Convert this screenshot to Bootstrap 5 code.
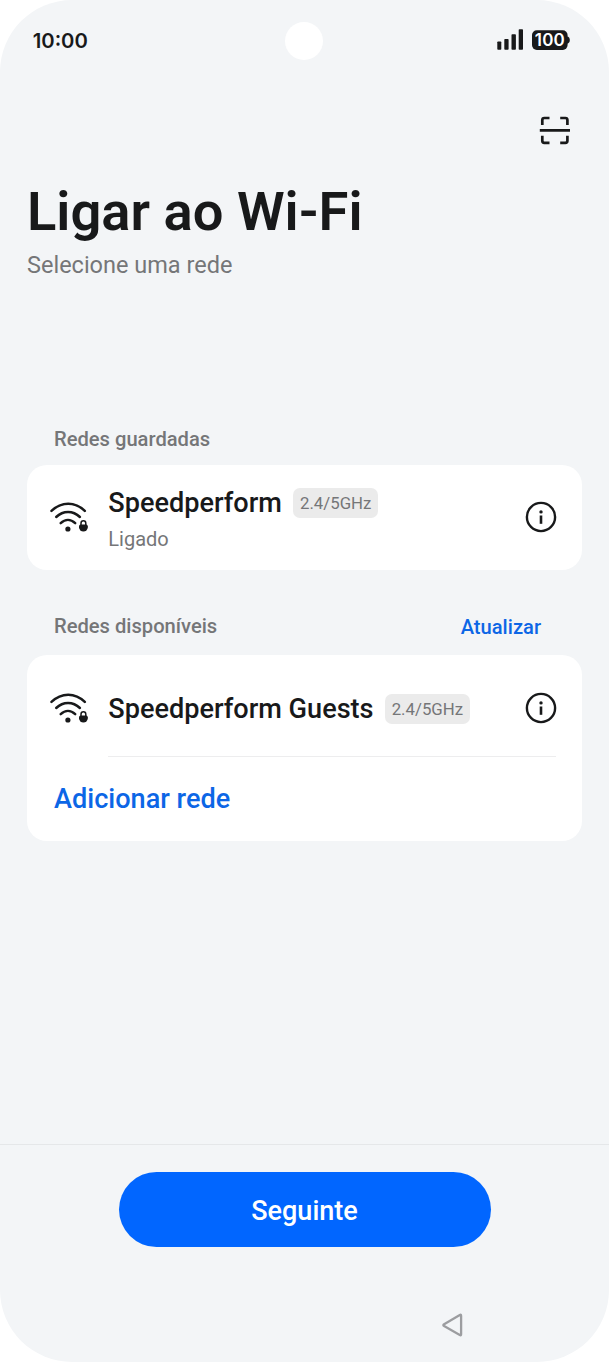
<!DOCTYPE html>
<html lang="pt">
<head>
<meta charset="utf-8">
<meta name="viewport" content="width=device-width, initial-scale=1">
<title>Ligar ao Wi-Fi</title>
<link href="https://cdn.jsdelivr.net/npm/bootstrap@5.3.0/dist/css/bootstrap.min.css" rel="stylesheet">
<style>
  body { font-family: Roboto, "Liberation Sans", sans-serif; background: #fff; color: #18191a; }
  .phone { height: 1362px; background: #f3f5f7; border-radius: 72px; overflow: hidden; }
  .status { height: 82px; padding: 0 39px 0 32.700px; font-family: Inter, Roboto, sans-serif; }
  .clock { font-size: 20.300px; font-weight: 600; line-height: 24px; }
  .camera { width: 38px; height: 38px; left: 285.400px; top: 21.700px; background: #fff; }
  .scan-row { height: 100px; padding: 33px 38px 0 0; }
  .headline { font-size: 54.300px; font-weight: 580; line-height: 60px; padding-left: 27px; }
  .muted { color: #757678; }
  .subtitle { font-size: 23.500px; line-height: 28px; margin-top: 9px; padding-left: 27px; }
  .section-label { font-size: 20.150px; font-weight: 500; line-height: 26px; }
  .label-saved { margin: 147px 0 0 54px; }
  .label-available { margin: 43px 68px 15px 54px; }
  .refresh { padding-top: 1px; }
  .panel { margin: 0 27px; background: #fff; border-radius: 20px; }
  .panel-saved { height: 105px; margin-top: 12.500px; }
  .net-row { padding: 0 25px 0 23px; }
  .row-guest { height: 101px; padding-top: 5px; }
  .row-guest .guest-name { padding-top: 2px; }
  .net-icon { width: 58.300px; }
  .ssid { font-size: 27.100px; font-weight: 500; line-height: 32px; }
  .band { width: 85px; height: 30px; border-radius: 7px; background: #ebebeb; color: #757678; font-size: 16.800px; font-weight: 450; margin-left: 11.300px; padding-top: 2px; }
  .state { font-size: 20px; line-height: 24px; margin-top: 8px; margin-bottom: -4px; }
  .blue { color: #0c66e6; }
  .divider { height: 1px; background: #ededee; margin: 0 26px 0 81px; }
  .add-row { height: 84px; padding: 0 0 0 27px; }
  .footer-bar { border-top: 1px solid #e5e7e9; padding-top: 27px; }
  .btn-next { width: 372px; height: 75px; background: #0166ff; color: #fff; font-size: 27px; font-weight: 500; }
  .btn-next:hover { background: #0059e0; color: #fff; }
  .btn-next span { display: block; padding-top: 3px; }
  .nav-keys { height: 115px; padding: 65px 0 0 441px; }
</style>
</head>
<body>
<svg class="d-none" xmlns="http://www.w3.org/2000/svg">
  <symbol id="wifi" viewBox="0 0 38 30">
    <g fill="none" stroke="#18191a" stroke-width="2.5" stroke-linecap="round">
      <path d="M1.500 8.900C11.500-.7 25-.7 34.800 8.900"/>
      <path d="M6.200 15C13.200 8.200 22.900 8.200 29.900 15"/>
      <path d="M10.700 21.200C15.200 16.900 20.700 16.900 25.200 21.200"/>
    </g>
    <circle cx="17.900" cy="27" r="2.600" fill="#18191a"/>
    <path d="M31 23.500v-2.300a2.400 2.400 0 0 1 4.800 0v2.300" fill="none" stroke="#18191a" stroke-width="1.500"/>
    <path d="M30.500 22.600h5.800q1.300 0 1.500 1.700v1a4.400 4.200 0 0 1-8.800 0v-1q.2-1.700 1.500-1.700z" fill="#18191a"/>
  </symbol>
  <symbol id="info" viewBox="0 0 32 32">
    <circle cx="16" cy="16" r="14.100" fill="none" stroke="#18191a" stroke-width="2.400"/>
    <circle cx="16" cy="10.900" r="1.700" fill="#18191a"/>
    <path d="M16 14.500v8.300" stroke="#18191a" stroke-width="2.600"/>
  </symbol>
</svg>

<div class="phone d-flex flex-column position-relative">
  <header class="status d-flex align-items-center justify-content-between">
    <span class="clock">10:00</span>
    <svg width="74" height="24" viewBox="0 0 74 24" role="img" aria-label="Rede e bateria">
      <g fill="#18191a">
        <rect x="1.300" y="12.500" width="4" height="8.300" rx=".8"/>
        <rect x="8.300" y="10" width="4.300" height="10.800" rx=".8"/>
        <rect x="15.500" y="5.200" width="4.400" height="15.600" rx=".8"/>
        <rect x="22.700" y=".2" width="4.300" height="20.600" rx=".8"/>
        <rect x="36" y="1.300" width="35.600" height="19.600" rx="4.800"/>
        <path d="M71 7.500q2.800.4 2.800 3.600t-2.800 3.600z"/>
      </g>
      <text x="53.800" y="17.300" text-anchor="middle" fill="#fff" font-family="Inter, Roboto, sans-serif" font-weight="600" font-size="17" textLength="30">100</text>
    </svg>
  </header>
  <span class="camera rounded-circle position-absolute"></span>

  <div class="scan-row d-flex justify-content-end align-items-start">
    <svg width="32" height="30" viewBox="0 0 32 30" fill="none" stroke="#18191a" stroke-width="2.700">
      <path d="M3.300 10V5q0-2 2-2H10.500M21.200 3h5.200q2 0 2 2V10M3.300 20.800v5q0 2 2 2H10.500M21.200 27.800h5.200q2 0 2-2v-5"/>
      <path d="M.8 15.400H31"/>
    </svg>
  </div>

  <h1 class="headline mb-0">Ligar ao Wi-Fi</h1>
  <p class="subtitle muted mb-0">Selecione uma rede</p>

  <h2 class="section-label muted label-saved mb-0">Redes guardadas</h2>
  <section class="panel panel-saved">
    <div class="net-row d-flex align-items-center h-100">
      <div class="net-icon"><svg width="38" height="30"><use href="#wifi"/></svg></div>
      <div class="flex-grow-1">
        <div class="d-flex align-items-center">
          <span class="ssid">Speedperform</span>
          <span class="band d-flex align-items-center justify-content-center">2.4/5GHz</span>
        </div>
        <div class="state muted">Ligado</div>
      </div>
      <svg width="32" height="32"><use href="#info"/></svg>
    </div>
  </section>

  <div class="label-available d-flex justify-content-between">
    <h2 class="section-label muted mb-0">Redes disponíveis</h2>
    <a class="section-label blue text-decoration-none refresh" href="#">Atualizar</a>
  </div>
  <section class="panel">
    <div class="net-row row-guest d-flex align-items-center">
      <div class="net-icon"><svg width="38" height="30"><use href="#wifi"/></svg></div>
      <div class="flex-grow-1 d-flex align-items-center guest-name">
        <span class="ssid">Speedperform Guests</span>
        <span class="band d-flex align-items-center justify-content-center">2.4/5GHz</span>
      </div>
      <svg width="32" height="32"><use href="#info"/></svg>
    </div>
    <div class="divider"></div>
    <a class="ssid blue d-flex align-items-center text-decoration-none add-row" href="#">Adicionar rede</a>
  </section>

  <footer class="mt-auto">
    <div class="footer-bar d-flex justify-content-center">
      <button class="btn btn-next rounded-pill border-0 p-0" type="button"><span>Seguinte</span></button>
    </div>
    <nav class="nav-keys d-flex">
      <svg width="24" height="26" viewBox="0 0 24 26"><path d="M20.100 3.700v18.600q0 1.400-1.300.7L3.100 14.100q-1.500-.9 0-1.800L18.800 3q1.300-.7 1.300.7z" fill="none" stroke="#9c9da0" stroke-width="2.300"/></svg>
    </nav>
  </footer>
</div>
<script src="https://cdn.jsdelivr.net/npm/bootstrap@5.3.0/dist/js/bootstrap.bundle.min.js"></script>
</body>
</html>
